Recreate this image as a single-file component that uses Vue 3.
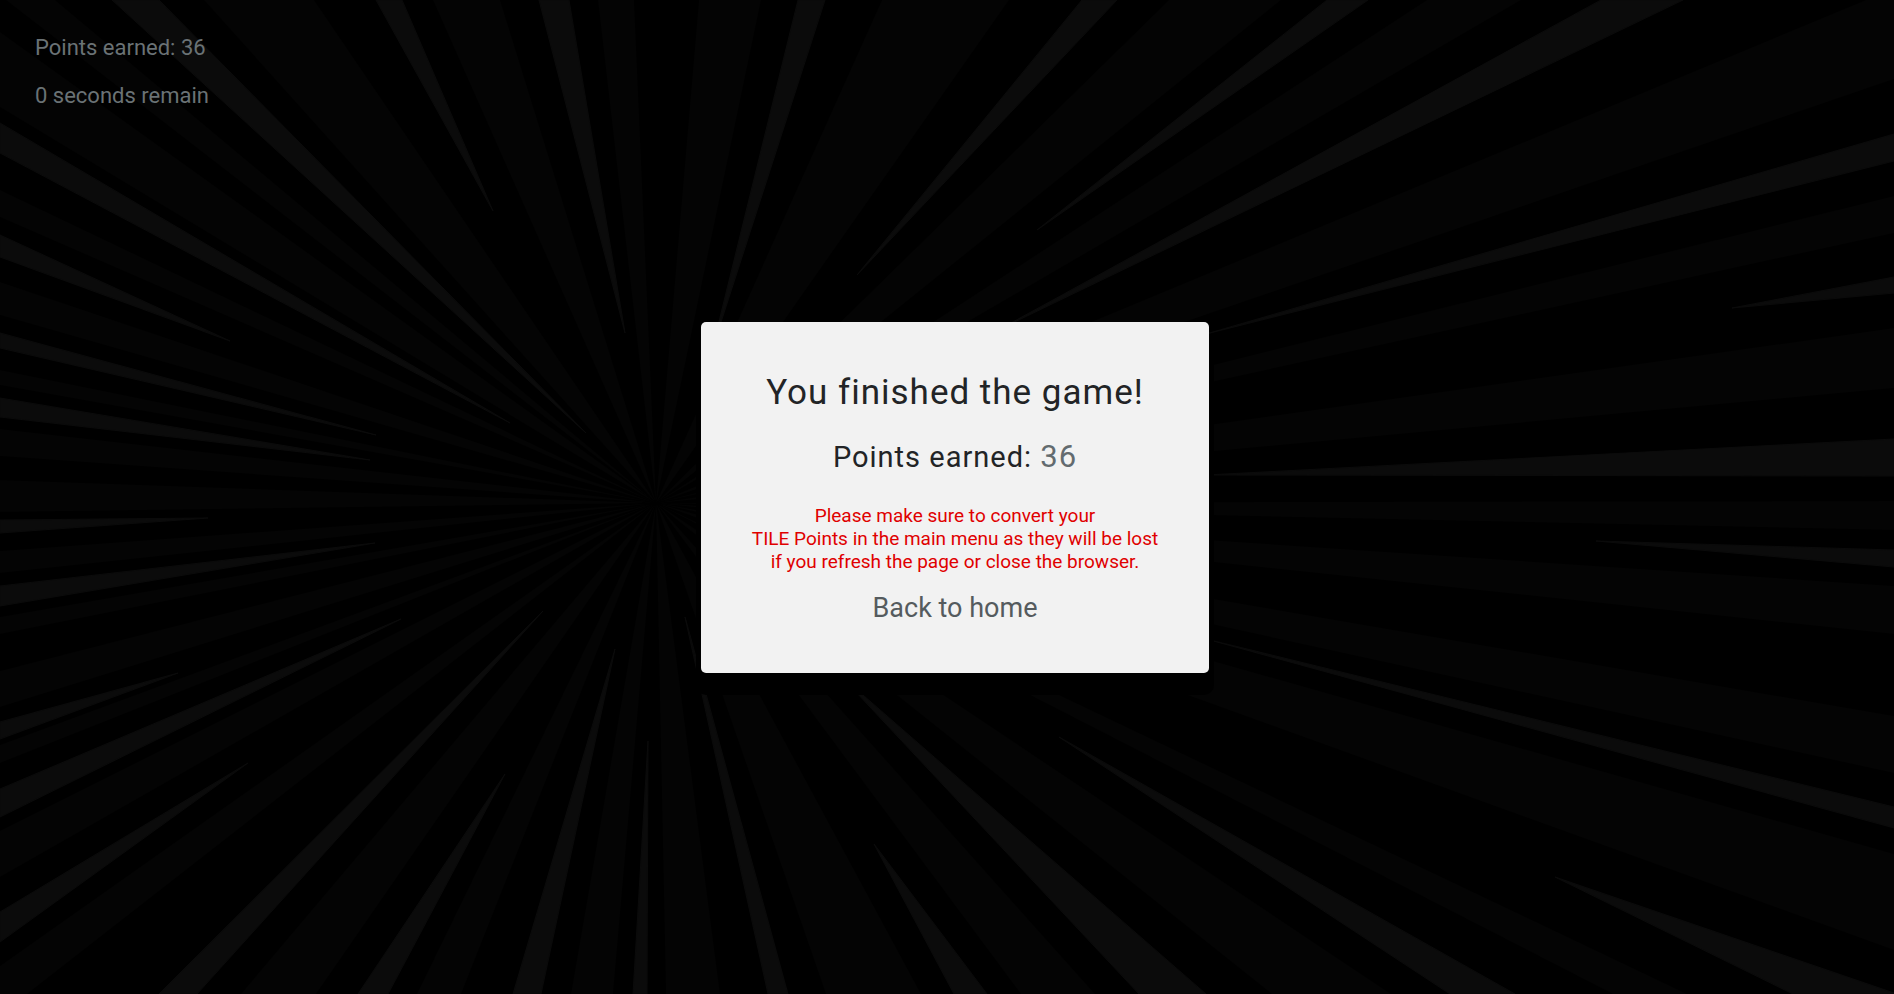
<script setup>
const points = 36
const seconds = 0

// Vanishing point that every dim ray starts from.
const origin = '656,503'

// Outer ends of the dim rays, clockwise from the top-left corner.
const dimRays = [
  '6,0 55,0', '204,0 314,0', '433,0 500,0', '598,0 634,0', '699,0 761,0',
  '882,0 1009,0', '1169,0 1281,0', '1427,0 1521,0', '1866,0 1894,0 1894,79',
  '1894,196 1894,233', '1894,328 1894,388', '1894,501 1894,530',
  '1894,586 1894,634', '1894,716 1894,773', '1894,854 1894,950',
  '1687,994 1613,994', '1391,994 1272,994', '1095,994 1021,994',
  '921,994 826,994', '720,994 666,994', '613,994 571,994', '461,994 417,994',
  '316,994 241,994', '27,994 0,994 0,966', '0,877 0,831', '0,763 0,745',
  '0,707 0,671', '0,634 0,617', '0,573 0,551', '0,512 0,480', '0,456 0,429',
  '0,385 0,370', '0,315 0,282', '0,217 0,190', '0,107 0,32',
]

// Bright streaks: tip first, then the outer end.
const brightRays = [
  '586,433 112,0 159,0', '493,211 376,0 402,0', '625,333 539,0 569,0',
  '712,350 798,0 825,0', '857,275 1082,0 1117,0', '1037,230 1327,0 1368,0',
  '1000,329 1601,0 1683,0', '1206,334 1894,134 1894,161',
  '1732,308 1894,277 1894,293', '1206,475 1894,439 1894,476',
  '1596,541 1894,550 1894,567', '1210,640 1894,807 1894,828',
  '1555,877 1894,993 1894,994 1793,994', '1059,737 1515,994 1450,994',
  '840,675 1206,994 1139,994', '874,844 987,994 954,994',
  '685,617 788,994 768,994', '648,741 647,994 633,994',
  '615,649 541,994 513,994', '505,774 388,994 358,994',
  '543,611 197,994 159,994', '248,763 0,942 0,912', '401,619 0,817 0,789',
  '178,673 0,739 0,722', '375,543 0,606 0,586', '208,518 0,533 0,520',
  '370,460 0,417 0,398', '376,435 0,348 0,333', '510,423 0,153 0,123',
  '230,341 0,257 0,235',
]
</script>

<template>
  <main class="game">
    <svg class="burst" viewBox="0 0 1894 994" preserveAspectRatio="xMidYMid slice" aria-hidden="true">
      <g class="dim">
        <polygon v-for="ray in dimRays" :key="ray" :points="`${origin} ${ray}`" />
      </g>
      <g class="bright">
        <polygon v-for="ray in brightRays" :key="ray" :points="ray" />
      </g>
    </svg>

    <header class="status">
      <p>Points earned: {{ points }}</p>
      <p>{{ seconds }} seconds remain</p>
    </header>

    <div class="overlay">
      <section class="dialog" role="dialog" aria-labelledby="dialog-title">
        <h1 id="dialog-title">You finished the game!</h1>
        <p class="score">Points earned: <span>{{ points }}</span></p>
        <p class="warning">
          Please make sure to convert your<br>
          TILE Points in the main menu as they will be lost<br>
          if you refresh the page or close the browser.
        </p>
        <a class="home" href="#">Back to home</a>
      </section>
    </div>
  </main>
</template>

<style>
body {
  margin: 0;
  background: #000;
}
</style>

<style scoped>
.game {
  position: relative;
  min-height: 100vh;
  overflow: hidden;
  background: #000;
  color: #6a7275;
  font-family: Roboto, "Liberation Sans", sans-serif;
}

.burst {
  position: absolute;
  inset: 0;
  width: 100%;
  height: 100%;
}

.dim {
  fill: #040404;
}

.bright {
  fill: #0b0b0b;
  stroke: #0b0b0b;
  stroke-width: 1;
  stroke-miterlimit: 16;
}

.status {
  position: relative;
  display: flex;
  flex-direction: column;
  gap: 24px;
  padding: 36px 35px;
  font-size: 22px;
  line-height: 24px;
}

p,
h1 {
  margin: 0;
  font-weight: 400;
}

.overlay {
  position: absolute;
  inset: 0;
  display: flex;
  align-items: center;
  justify-content: center;
  padding-left: 16px;
}

.dialog {
  box-sizing: border-box;
  width: 508px;
  max-width: 100%;
  padding: 50px 40px 49px;
  border-radius: 5px;
  background: #f2f2f2;
  box-shadow: 0 17px 0 5px #000;
  color: #222426;
  text-align: center;
}

h1 {
  margin-bottom: 25px;
  font-size: 35px;
  line-height: 42px;
  letter-spacing: 1px;
}

.score {
  margin-bottom: 29px;
  font-size: 29px;
  line-height: 36px;
  letter-spacing: 1px;
}

.score span {
  color: #636b6f;
  font-size: 31px;
}

.warning {
  margin-bottom: 19px;
  color: #e00000;
  font-size: 19px;
  line-height: 23px;
}

.home {
  display: inline-block;
  color: #555b5e;
  font-size: 27px;
  line-height: 32px;
  text-decoration: none;
}
</style>
